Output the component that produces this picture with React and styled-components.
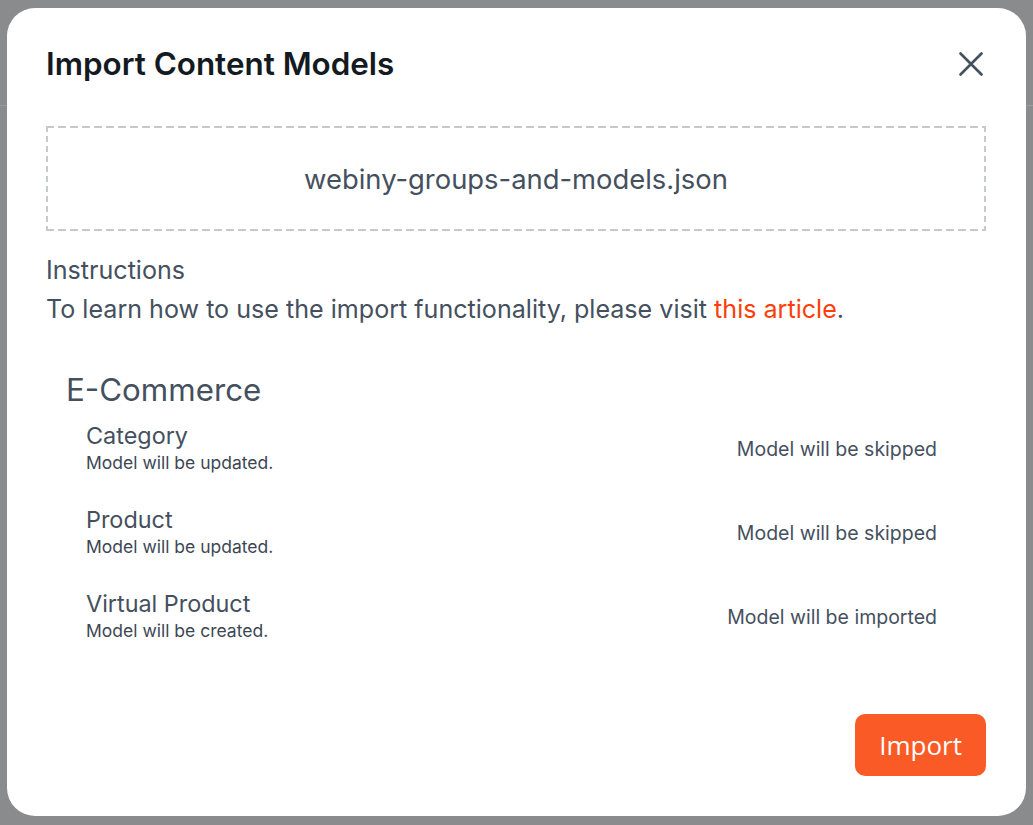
import React from "react";
import styled, { createGlobalStyle } from "styled-components";

const GlobalStyle = createGlobalStyle`
  html, body {
    margin: 0;
    padding: 0;
  }
  body {
    font-family: Inter, "Noto Sans", sans-serif;
    -webkit-font-smoothing: antialiased;
  }
`;

const models = [
  { name: "Category", note: "Model will be updated.", action: "Model will be skipped" },
  { name: "Product", note: "Model will be updated.", action: "Model will be skipped" },
  { name: "Virtual Product", note: "Model will be created.", action: "Model will be imported" },
];

function CloseIcon() {
  return (
    <svg width="24" height="24" viewBox="0 0 24 24" fill="none">
      <path
        d="M1.5 1.5 22.5 22.5M22.5 1.5 1.5 22.5"
        stroke="#45505e"
        strokeWidth="2.6"
        strokeLinecap="round"
      />
    </svg>
  );
}

function App() {
  return (
    <Backdrop>
      <GlobalStyle />
      <Modal>
        <Header>
          <Title>Import Content Models</Title>
          <CloseButton aria-label="Close">
            <CloseIcon />
          </CloseButton>
        </Header>

        <DropZone>webiny-groups-and-models.json</DropZone>

        <Instructions>
          <p>Instructions</p>
          <p>
            To learn how to use the import functionality, please visit{" "}
            <a href="#article">this article</a>.
          </p>
        </Instructions>

        <Group>
          <GroupTitle>E-Commerce</GroupTitle>
          {models.map((m) => (
            <ModelRow key={m.name}>
              <div>
                <ModelName>{m.name}</ModelName>
                <ModelNote>{m.note}</ModelNote>
              </div>
              <ModelAction>{m.action}</ModelAction>
            </ModelRow>
          ))}
        </Group>

        <Footer>
          <PrimaryButton>Import</PrimaryButton>
        </Footer>
      </Modal>
    </Backdrop>
  );
}

const Backdrop = styled.div`
  box-sizing: border-box;
  width: 100%;
  height: 100vh;
  padding: 8px 7px 9px 7px;
  display: flex;
  background: linear-gradient(
    to bottom,
    #8a8b8c 105px,
    #9b9c9d 105px,
    #9b9c9d 106px,
    #8a8b8c 106px
  );
`;

const Modal = styled.div`
  box-sizing: border-box;
  flex: 1;
  display: flex;
  flex-direction: column;
  background: #ffffff;
  border-radius: 28px;
  padding: 36px 40px 40px 39px;
`;

const Header = styled.div`
  display: flex;
  align-items: center;
  justify-content: space-between;
  height: 40px;
  margin-bottom: 42px;
`;

const Title = styled.h2`
  margin: 0;
  font-size: 31.4px;
  font-weight: 600;
  line-height: 40px;
  color: #141a21;
`;

const CloseButton = styled.button`
  width: 30px;
  height: 30px;
  padding: 0;
  border: 0;
  background: transparent;
  display: flex;
  align-items: center;
  justify-content: center;
  cursor: pointer;
`;

const dash = "#c6c9cf";

const DropZone = styled.div`
  box-sizing: border-box;
  height: 105px;
  display: flex;
  align-items: center;
  justify-content: center;
  font-size: 27.4px;
  color: #45505e;
  background:
    repeating-linear-gradient(to right, ${dash} 0 8px, transparent 8px 12px) top / 100% 2px no-repeat,
    repeating-linear-gradient(to right, ${dash} 0 8px, transparent 8px 12px) bottom / 100% 2px no-repeat,
    repeating-linear-gradient(to bottom, ${dash} 0 6px, transparent 6px 10px) left / 2px 100% no-repeat,
    repeating-linear-gradient(to bottom, ${dash} 0 6px, transparent 6px 10px) right / 2px 100% no-repeat;
`;

const Instructions = styled.div`
  margin-top: 20px;
  font-size: 25.1px;
  line-height: 39px;
  color: #45505e;
  p {
    margin: 0;
  }
  a {
    color: #fa3f0a;
    text-decoration: none;
  }
`;

const Group = styled.div`
  margin-top: 41px;
  padding-left: 20px;
  padding-right: 49px;
`;

const GroupTitle = styled.h3`
  margin: 0 0 11px;
  font-size: 31.3px;
  font-weight: 400;
  line-height: 40px;
  color: #45505e;
`;

const ModelRow = styled.div`
  display: flex;
  align-items: center;
  justify-content: space-between;
  padding-left: 20px;
  margin-bottom: 31px;
`;

const ModelName = styled.div`
  font-size: 23.4px;
  line-height: 30px;
  color: #45505e;
`;

const ModelNote = styled.div`
  margin-top: 1px;
  font-size: 17.5px;
  line-height: 22px;
  color: #3d4754;
`;

const ModelAction = styled.div`
  padding-top: 2px;
  font-size: 19.5px;
  color: #45505e;
`;

const Footer = styled.div`
  margin-top: auto;
  display: flex;
  justify-content: flex-end;
`;

const PrimaryButton = styled.button`
  height: 62px;
  padding: 0 24px;
  border: 0;
  border-radius: 10px;
  background: #fa5a25;
  color: #ffffff;
  font-family: "Open Sans", "Noto Sans", sans-serif;
  font-size: 26px;
  cursor: pointer;
`;

export default App;
